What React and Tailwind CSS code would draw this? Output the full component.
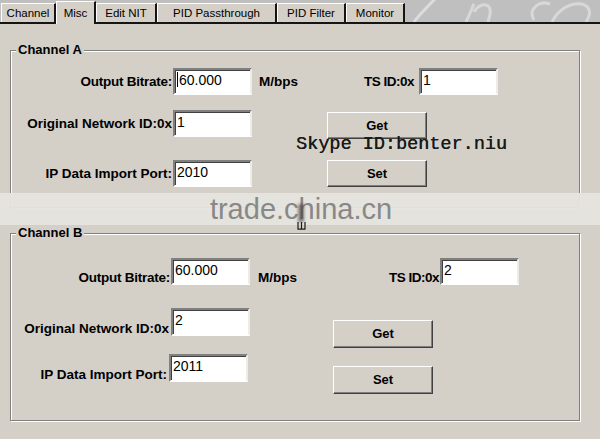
import React from "react";

const label = "text-[13.5px] font-bold leading-[15px] whitespace-nowrap text-black";

function Field({ value, caret = false, h = "h-[27px]" }) {
  return (
    <div
      className={`w-[79px] ${h} bg-white border-2 border-t-[#808080] border-l-[#808080] border-b-white border-r-[#eeece8] shadow-[inset_1px_1px_0_#404040] pl-[2px] pt-[2px] flex items-start text-[14px] leading-[16px] text-black`}
    >
      {caret && <span className="w-[1px] h-[15px] bg-black mr-[1px]" />}
      {value}
    </div>
  );
}

function Btn({ children, h = "h-[27px]" }) {
  return (
    <button
      type="button"
      className={`w-[100px] ${h} flex items-center justify-center border border-t-white border-l-white border-b-[#404040] border-r-[#404040] shadow-[inset_-1px_-1px_0_#808080] bg-[#d4d0c8] text-[13px] font-bold text-black`}
    >
      {children}
    </button>
  );
}

function Group({ title, className, children }) {
  return (
    <div
      className={`relative ml-[10px] w-[570px] border border-[#808080] shadow-[inset_1px_1px_0_#fff,1px_1px_0_#fff] ${className}`}
    >
      <span className="absolute -top-[9px] left-[5px] px-[2px] bg-[#d4d0c8] text-[13px] leading-[15px] font-bold text-black">
        {title}
      </span>
      {children}
    </div>
  );
}

const tabs = [
  { name: "Channel", w: "w-[55px]" },
  { name: "Misc", w: "w-[40px]", active: true },
  { name: "Edit NIT", w: "w-[61px]" },
  { name: "PID Passthrough", w: "w-[120px]" },
  { name: "PID Filter", w: "w-[69px]" },
  { name: "Monitor", w: "w-[59px]" },
];

export default function App() {
  return (
    <div className="relative w-[600px] h-[439px] overflow-hidden bg-[#d4d0c8] font-['Liberation_Sans',Arial,sans-serif] text-black">
      {/* tab strip */}
      <div className="relative h-[24px] bg-[#bfbfbf] border-b-2 border-[#151515] flex items-end pl-[1px]">
        <svg className="absolute left-[400px] top-0 w-[200px] h-[22px]" viewBox="0 0 200 22" fill="none">
          <path d="M14 22 C20 14 28 6 36 -2" stroke="#ffffff" strokeOpacity="0.45" strokeWidth="3" />
          <path d="M66 22 C70 14 72 8 74 4 M74 12 C80 2 92 2 90 14 L88 22" stroke="#ffffff" strokeOpacity="0.4" strokeWidth="3" />
          <path d="M150 4 C138 0 128 10 134 20 M152 22 C158 10 170 2 182 4 C190 6 192 14 186 22" stroke="#ffffff" strokeOpacity="0.4" strokeWidth="3" />
        </svg>
        {tabs.map((t) =>
          t.active ? (
            <div
              key={t.name}
              className={`${t.w} relative z-10 h-[23px] -mb-[2px] bg-[#d4d0c8] border-t border-l border-white border-r-2 border-r-[#151515] flex items-start justify-center pt-[5px] text-[11.5px] leading-[13px]`}
            >
              {t.name}
            </div>
          ) : (
            <div
              key={t.name}
              className={`${t.w} h-[19px] bg-[#d4d0c8] border-t border-l border-white border-r-2 border-r-[#151515] flex items-center justify-center text-[11.5px] leading-[13px]`}
            >
              {t.name}
            </div>
          )
        )}
      </div>

      {/* Channel A */}
      <Group title="Channel A" className="mt-[26px] h-[158px] pt-[17px]">
        <div className="flex items-center h-[27px]">
          <span className={`w-[162px] pr-[1px] text-right tracking-[-0.25px] ${label}`}>Output Bitrate:</span>
          <Field value="60.000" caret />
          <span className={`w-[70px] pl-[7px] ${label}`}>M/bps</span>
          <span className={`w-[92px] text-right tracking-[-0.5px] ${label}`}>TS ID:0x</span>
          <div className="ml-[5px]">
            <Field value="1" />
          </div>
        </div>
        <div className="flex mt-[15px]">
          <div className="flex flex-col">
            <div className="flex items-center">
              <span className={`w-[162px] pr-[1px] text-right ${label}`}>Original Network ID:0x</span>
              <Field value="1" />
            </div>
            <div className="flex items-center mt-[23px]">
              <span className={`w-[162px] pr-[1px] text-right ${label}`}>IP Data Import Port:</span>
              <Field value="2010" />
            </div>
          </div>
          <div className="flex flex-col ml-[75px] pt-[2px]">
            <Btn>Get</Btn>
            <div className="mt-[21px]">
              <Btn>Set</Btn>
            </div>
          </div>
        </div>
        <span className="absolute left-[285px] top-[85px] text-[18.5px] leading-[18px] font-['Liberation_Mono','Courier_New',monospace] text-[#1a1a1a] whitespace-nowrap [text-shadow:0.3px_0_0_#1a1a1a]">
          Skype ID:benter.niu
        </span>
      </Group>

      {/* Channel B */}
      <Group title="Channel B" className="mt-[25px] h-[188px] pt-[24px]">
        <div className="flex items-end h-[27px]">
          <span className={`w-[160px] pr-[1px] text-right tracking-[-0.25px] ${label}`}>Output Bitrate:</span>
          <Field value="60.000" />
          <span className={`w-[70px] pl-[8px] ${label}`}>M/bps</span>
          <span className={`w-[119px] text-right tracking-[-0.5px] ${label}`}>TS ID:0x</span>
          <div className="ml-[1px]">
            <Field value="2" />
          </div>
        </div>
        <div className="flex mt-[23px]">
          <div className="flex flex-col">
            <div className="flex items-end">
              <span className={`w-[160px] pr-[2px] text-right ${label}`}>Original Network ID:0x</span>
              <Field value="2" h="h-[28px]" />
            </div>
            <div className="flex items-end mt-[18px]">
              <span className={`w-[158px] pr-[2px] text-right ${label}`}>IP Data Import Port:</span>
              <Field value="2011" h="h-[28px]" />
            </div>
          </div>
          <div className="flex flex-col ml-[83px] pt-[12px]">
            <Btn h="h-[28px]">Get</Btn>
            <div className="mt-[18px]">
              <Btn h="h-[28px]">Set</Btn>
            </div>
          </div>
        </div>
      </Group>

      {/* watermark band */}
      <div className="absolute left-0 top-[193px] w-[600px] h-[32px] bg-[#e6e4df]/95 flex items-center justify-center">
        <span className="text-[29px] leading-[32px] text-[#888888] pl-[2px]">trade.china.cn</span>
      </div>
      <div className="absolute left-[298px] top-[204px] w-[6px] h-[18px] bg-[#3a3a3a] opacity-60 blur-[1.5px]" />
      <svg className="absolute left-[297px] top-[222px] w-[9px] h-[8px]" viewBox="0 0 9 8">
        <path d="M1 0 V7 M4.5 0 V7 M8 0 V7 M0.5 7.2 H8.5" stroke="#1a1a1a" strokeWidth="1.2" fill="none" />
      </svg>
    </div>
  );
}
